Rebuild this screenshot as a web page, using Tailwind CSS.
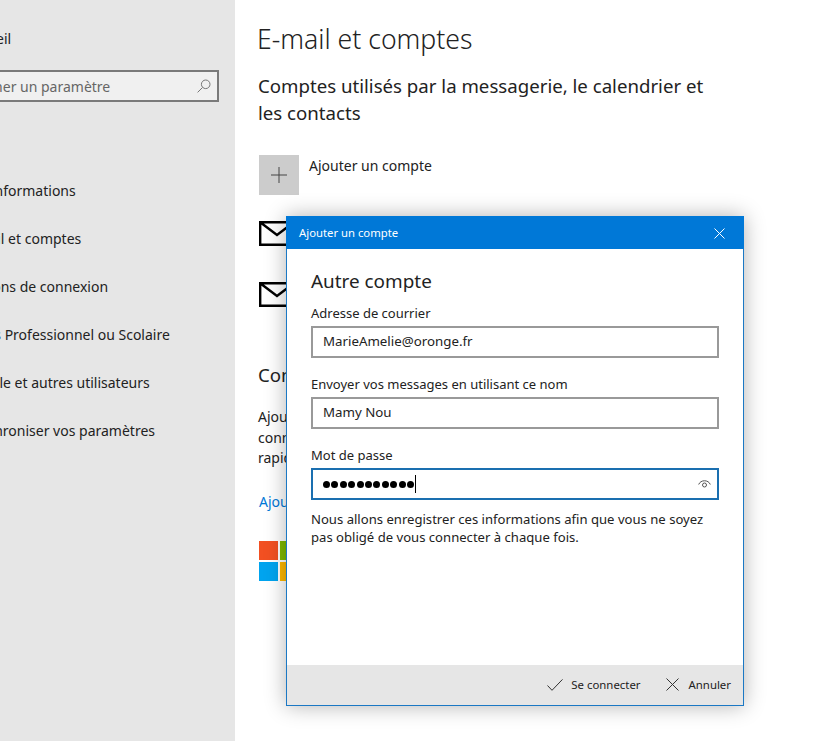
<!DOCTYPE html>
<html lang="fr">
<head>
  <meta charset="UTF-8" />
  <title>E-mail et comptes</title>
  <script src="https://cdn.jsdelivr.net/npm/@tailwindcss/browser@4"></script>
</head>
<body class="relative h-[741px] w-[817px] overflow-hidden bg-white font-['Noto_Sans',sans-serif] text-[14px] text-[#222]">
  <div class="flex h-full">
    <!-- sidebar, cut off at the left -->
    <aside class="w-[235px] shrink-0 overflow-hidden bg-[#e6e6e6] text-[#222]">
      <div class="ml-[-36px] w-[271px]">
        <div class="mt-[26px] flex h-[24px] items-center"><span class="ml-px">Accueil</span></div>
        <div class="ml-[-34px] mr-[16px] mt-[20px] flex h-[32px] items-center justify-between border-2 border-[#7a7a7a] bg-[#f0f0f0] pl-[10px] pr-[6px] text-[#666]">
          <span class="whitespace-nowrap">Rechercher un paramètre</span>
          <svg class="h-[14px] w-[14px]" viewBox="0 0 14 14" fill="none" stroke="#777" stroke-width="1"><circle cx="8.7" cy="5.3" r="4.3"/><path d="M5.6 8.4.6 13.4"/></svg>
        </div>
        <div class="mt-[64px] flex flex-col whitespace-nowrap">
          <div class="flex h-12 items-center">Vos informations</div>
          <div class="flex h-12 items-center">E-mail et comptes</div>
          <div class="flex h-12 items-center">Options de connexion</div>
          <div class="flex h-12 items-center">Accès Professionnel ou Scolaire</div>
          <div class="flex h-12 items-center">Famille et autres utilisateurs</div>
          <div class="flex h-12 items-center">Synchroniser vos paramètres</div>
        </div>
      </div>
    </aside>

    <!-- main settings page -->
    <main class="flex-1 pl-[22px] pt-[20px]">
      <h1 class="text-[26.6px] font-light leading-[38px] text-[#222]">E-mail et comptes</h1>
      <h2 class="ml-px mt-[14px] w-[460px] text-[18.65px] leading-[27px]">Comptes utilisés par la messagerie, le calendrier et les contacts</h2>
      <div class="ml-[2px] mt-[29px] flex gap-[10px]">
        <div class="flex h-10 w-10 items-center justify-center bg-[#cccccc]">
          <svg class="h-4 w-4" viewBox="0 0 16 16" stroke="#444" stroke-width="1"><path d="M8 0v16M0 8h16"/></svg>
        </div>
        <span class="leading-[22px]">Ajouter un compte</span>
      </div>
      <div class="ml-[2px] mt-[26px] flex flex-col gap-[36px]">
        <svg class="h-[25px] w-[36px]" viewBox="0 0 36 25" fill="none" stroke="#000" stroke-width="2.4"><path d="M1.2 1.2h33.6v22.6H1.2zM1.2 1.2 18 14 34.8 1.2"/></svg>
        <svg class="h-[25px] w-[36px]" viewBox="0 0 36 25" fill="none" stroke="#000" stroke-width="2.4"><path d="M1.2 1.2h33.6v22.6H1.2zM1.2 1.2 18 14 34.8 1.2"/></svg>
      </div>
      <h2 class="ml-px mt-[54px] text-[18.65px] leading-[27px]">Comptes utilisés par d'autres applications</h2>
      <p class="ml-px mt-[19px] w-[440px] leading-[20.5px]">Ajoutez les comptes utilisés par vos applications pour vous connecter plus rapidement et facilement à vos applications rapidement</p>
      <a class="ml-[2px] mt-[23px] block leading-[20px] text-[#0078d7]">Ajouter un compte Microsoft</a>
      <div class="ml-[2px] mt-[29px] grid w-[40px] grid-cols-2 gap-[2px]">
        <div class="h-[19px] w-[19px] bg-[#f25022]"></div>
        <div class="h-[19px] w-[19px] bg-[#7fba00]"></div>
        <div class="h-[19px] w-[19px] bg-[#00a4ef]"></div>
        <div class="h-[19px] w-[19px] bg-[#ffb900]"></div>
      </div>
    </main>
  </div>

  <!-- dialog over the page -->
  <div class="absolute left-[286px] top-[216px] flex h-[490px] w-[458px] flex-col border border-[#1b78c4] bg-white shadow-[0_0_20px_rgba(0,0,0,0.3)]">
    <div class="-mx-px -mt-px flex h-[33px] shrink-0 items-center justify-between bg-[#0078d7] pl-[13px] pr-[19px] pt-px text-[11.3px] text-white">
      <span>Ajouter un compte</span>
      <svg class="h-[11px] w-[11px]" viewBox="0 0 11 11" stroke="#fff" stroke-width="1"><path d="M.5.5l10 10M10.5.5l-10 10"/></svg>
    </div>
    <div class="flex-1 px-[24px]">
      <h3 class="mt-[19px] text-[18.9px] leading-[27px]">Autre compte</h3>
      <label class="mt-[8px] block text-[13px] leading-[20px]">Adresse de courrier</label>
      <div class="mt-[3px] flex h-[32px] items-center border-2 border-[#999] pl-[10px] text-[13.3px]">MarieAmelie@oronge.fr</div>
      <label class="mt-[16px] block text-[13px] leading-[20px]">Envoyer vos messages en utilisant ce nom</label>
      <div class="mt-[3px] flex h-[32px] items-center border-2 border-[#999] pl-[10px] text-[13.3px]">Mamy Nou</div>
      <label class="mt-[16px] block text-[13px] leading-[20px]">Mot de passe</label>
      <div class="mt-[3px] flex h-[32px] items-center justify-between border-2 border-[#1a6fb0] pl-[10px] pr-[6px]">
        <div class="flex items-center">
          <div class="flex gap-[1.4px]">
            <i class="h-[7px] w-[7px] rounded-full bg-black"></i><i class="h-[7px] w-[7px] rounded-full bg-black"></i><i class="h-[7px] w-[7px] rounded-full bg-black"></i><i class="h-[7px] w-[7px] rounded-full bg-black"></i><i class="h-[7px] w-[7px] rounded-full bg-black"></i><i class="h-[7px] w-[7px] rounded-full bg-black"></i><i class="h-[7px] w-[7px] rounded-full bg-black"></i><i class="h-[7px] w-[7px] rounded-full bg-black"></i><i class="h-[7px] w-[7px] rounded-full bg-black"></i><i class="h-[7px] w-[7px] rounded-full bg-black"></i><i class="h-[7px] w-[7px] rounded-full bg-black"></i>
          </div>
          <div class="ml-px h-[18px] w-px bg-black"></div>
        </div>
        <svg class="h-[10px] w-[13px]" viewBox="0 0 13 10" fill="none" stroke="#555" stroke-width="1"><path d="M.7 5.5C2.5 .5 10.5 .5 12.3 5.5"/><circle cx="6.5" cy="6" r="2"/></svg>
      </div>
      <p class="mt-[10px] text-[13.1px] leading-[18px]">Nous allons enregistrer ces informations afin que vous ne soyez pas obligé de vous connecter à chaque fois.</p>
    </div>
    <div class="flex h-[40px] shrink-0 items-center justify-end gap-[25px] bg-[#e6e6e6] pr-[12px] text-[11.4px]">
      <div class="flex items-center gap-[8px]">
        <svg class="h-[12px] w-[16px]" viewBox="0 0 16 12" fill="none" stroke="#333" stroke-width="1"><path d="M.5 6.5 5 11.3 15.5.4"/></svg>
        <span>Se connecter</span>
      </div>
      <div class="flex items-center gap-[10px]">
        <svg class="h-[13px] w-[13px]" viewBox="0 0 13 13" fill="none" stroke="#333" stroke-width="1"><path d="M.5.5l12 12M12.5.5l-12 12"/></svg>
        <span>Annuler</span>
      </div>
    </div>
  </div>
</body>
</html>
